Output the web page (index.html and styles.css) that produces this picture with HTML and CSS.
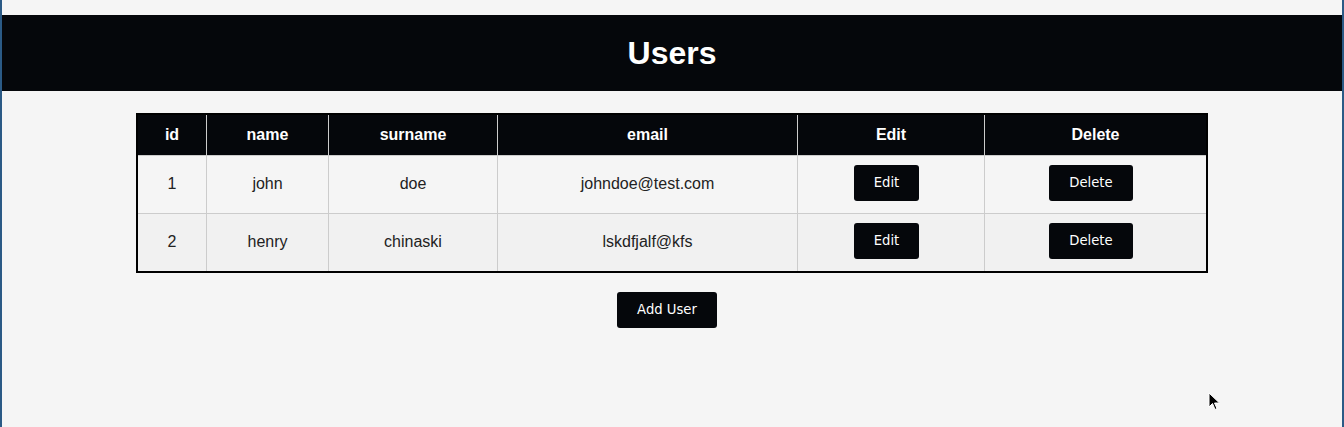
FILE: index.html
```html
<!DOCTYPE html>
<html>
<head>
<meta charset="utf-8">
<title>Users</title>
<link rel="stylesheet" href="styles.css">
</head>
<body>
<div class="page">
  <header class="topbar"><h1>Users</h1></header>
  <main class="content">
    <table class="users">
      <thead>
        <tr><th class="c-id">id</th><th class="c-name">name</th><th class="c-surname">surname</th><th class="c-email">email</th><th class="c-edit">Edit</th><th>Delete</th></tr>
      </thead>
      <tbody>
        <tr><td>1</td><td>john</td><td>doe</td><td>johndoe@test.com</td><td><button class="btn">Edit</button></td><td><button class="btn">Delete</button></td></tr>
        <tr class="alt"><td>2</td><td>henry</td><td>chinaski</td><td>lskdfjalf@kfs</td><td><button class="btn">Edit</button></td><td><button class="btn">Delete</button></td></tr>
      </tbody>
    </table>
    <button class="btn add">Add User</button>
  </main>
  <svg class="cursor" width="14" height="20" viewBox="0 0 14 20"><path d="M1 1 L1 15 L4.5 11.5 L7 17.5 L9 16.5 L6.5 11 L11.5 11 Z" fill="#000" stroke="#fff" stroke-width="1"/></svg>
</div>
</body>
</html>
```
FILE: styles.css
```css
html, body { margin: 0; padding: 0; }
body { background: #f4f4f4; font-family: "Liberation Sans", Arial, sans-serif; }
.page {
  position: relative;
  height: 427px;
  box-sizing: border-box;
  border-left: 2px solid #2b5a86;
  border-right: 2px solid #2b5a86;
  padding-top: 15px;
  background: #f5f5f5;
}
.topbar { background: #05070b; padding: 20px 0 19px; text-align: center; }
.topbar h1 { margin: 0; color: #fff; font-size: 32px; line-height: 37px; font-weight: bold; }
.content { display: flex; flex-direction: column; align-items: center; padding-top: 22px; }
.users {
  width: 80%;
  border-collapse: collapse;
  border: 2px solid #000;
  font-size: 16px;
  color: #222;
}
.users th {
  background: #05070b;
  color: #fff;
  font-weight: bold;
  padding: 11px 8px;
  line-height: 18px;
  border: 1px solid #ccc;
  border-top: 0;
}
.users td {
  text-align: center;
  padding: 10px 8px 11px;
  line-height: 18px;
  height: 36px;
  border: 1px solid #ccc;
  background: #f5f5f5;
}
.users tr.alt td { background: #f1f1f1; }
.c-id { width: 52px; }
.c-name { width: 105px; }
.c-surname { width: 152px; }
.c-email { width: 283px; }
.c-edit { width: 170px; }
.btn {
  display: inline-block;
  vertical-align: middle;
  background: #05070b;
  color: #fff;
  border: 0;
  border-radius: 3px;
  font-family: "DejaVu Sans", sans-serif;
  font-size: 13.2px;
  line-height: 16px;
  padding: 10px 20px;
  margin: 0;
}
.users td .btn { margin: -1px 0 1px -9px; }
.add { margin-top: 19px; margin-left: -10px; }
.cursor { position: absolute; left: 1206px; top: 392px; }
```
